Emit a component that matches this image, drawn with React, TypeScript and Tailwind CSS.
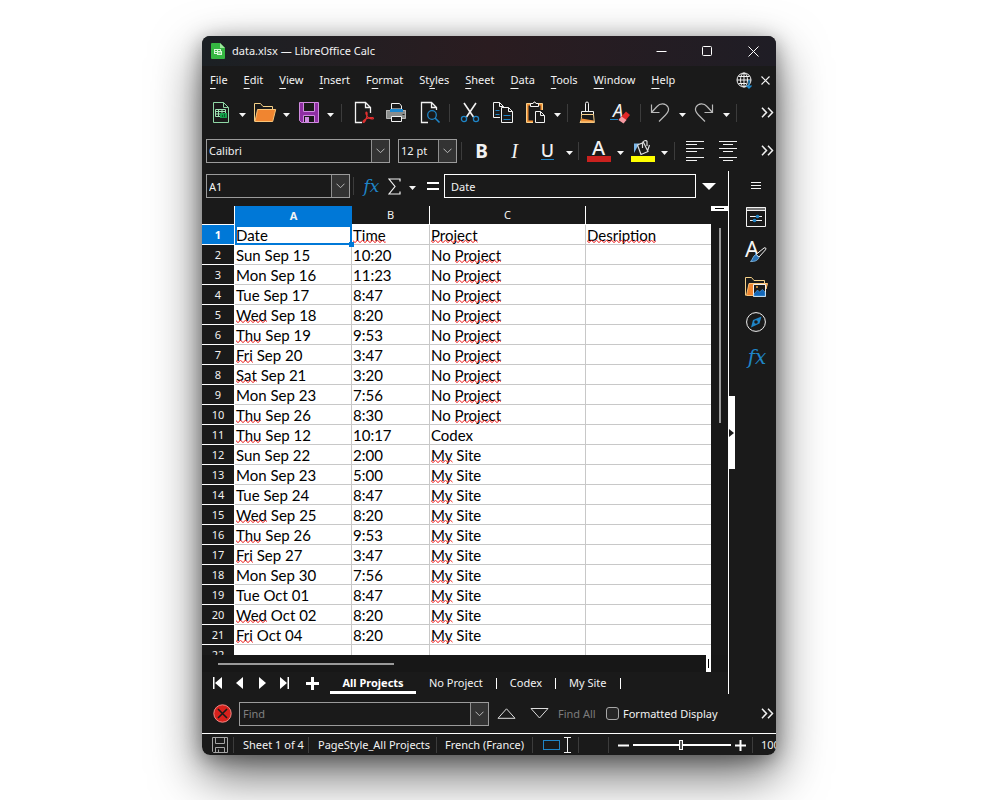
import type { ReactNode } from "react";

const rows: [string, string, string][] = [
  ["Date", "Time", "Project"],
  ["Sun Sep 15", "10:20", "No Project"],
  ["Mon Sep 16", "11:23", "No Project"],
  ["Tue Sep 17", "8:47", "No Project"],
  ["Wed Sep 18", "8:20", "No Project"],
  ["Thu Sep 19", "9:53", "No Project"],
  ["Fri Sep 20", "3:47", "No Project"],
  ["Sat Sep 21", "3:20", "No Project"],
  ["Mon Sep 23", "7:56", "No Project"],
  ["Thu Sep 26", "8:30", "No Project"],
  ["Thu Sep 12", "10:17", "Codex"],
  ["Sun Sep 22", "2:00", "My Site"],
  ["Mon Sep 23", "5:00", "My Site"],
  ["Tue Sep 24", "8:47", "My Site"],
  ["Wed Sep 25", "8:20", "My Site"],
  ["Thu Sep 26", "9:53", "My Site"],
  ["Fri Sep 27", "3:47", "My Site"],
  ["Mon Sep 30", "7:56", "My Site"],
  ["Tue Oct 01", "8:47", "My Site"],
  ["Wed Oct 02", "8:20", "My Site"],
  ["Fri Oct 04", "8:20", "My Site"],
  ["", "", ""],
];

const misspelt = new Set(["Time", "Project", "Desription", "Wed", "Thu", "Fri", "Sat", "My"]);

// Tile shared by every spelling mark.
function SquigglePattern() {
  return (
    <svg width="0" height="0" className="absolute" aria-hidden="true">
      <defs>
        <pattern id="squiggle" width="5" height="3" patternUnits="userSpaceOnUse">
          <path d="M-.5 .2L2 2.600 4.500.2 5.500 1.200" fill="none" stroke="#f01818" strokeWidth="1" />
        </pattern>
      </defs>
    </svg>
  );
}

function Misspelt({ word }: { word: string }) {
  return (
    <span className="relative inline-block">
      {word}
      <svg className="absolute bottom-px left-0 h-[3px] w-full" aria-hidden="true">
        <rect width="100%" height="3" fill="url(#squiggle)" />
      </svg>
    </span>
  );
}

function Spelled({ text }: { text: string }) {
  return (
    <>
      {text.split(" ").map((word, i) => (
        <span key={i}>
          {i > 0 && " "}
          {misspelt.has(word) ? <Misspelt word={word} /> : word}
        </span>
      ))}
    </>
  );
}

function Icon({ children, size = 23 }: { children: ReactNode; size?: number }) {
  return (
    <svg width={size} height={size} viewBox={`0 0 ${size} ${size}`} fill="none" aria-hidden="true" className="shrink-0 overflow-visible">
      {children}
    </svg>
  );
}

function Tool({ label, children }: { label: string; children: ReactNode }) {
  return (
    <button aria-label={label} className="flex h-7 w-[33px] shrink-0 items-center justify-center">
      {children}
    </button>
  );
}

function Arrow({ label, className = "w-[11px]" }: { label: string; className?: string }) {
  return (
    <button aria-label={label} className={`flex h-7 shrink-0 items-center justify-center pt-1 ${className}`}>
      <svg width="7" height="4" viewBox="0 0 7 4" aria-hidden="true">
        <path d="M0 0h7L3.5 4z" fill="#f5f5f5" />
      </svg>
    </button>
  );
}

function Sep({ className = "w-[7px]" }: { className?: string }) {
  return (
    <span className={`flex shrink-0 justify-center ${className}`}>
      <span className="h-[18px] w-px bg-[#3c3c3c]" />
    </span>
  );
}

function More({ label }: { label: string }) {
  return (
    <button aria-label={label} className="mr-[2px] ml-auto shrink-0">
      <svg width="13" height="11" viewBox="0 0 13 11" fill="none" stroke="#f0f0f0" strokeWidth="1.5" aria-hidden="true">
        <path d="M1 .8 5.500 5.500 1 10.200M7 .8l4.500 4.700L7 10.200" />
      </svg>
    </button>
  );
}

function DropButton() {
  return (
    <span className="pointer-events-none flex w-[18px] shrink-0 items-center justify-center border-l border-[#8f8f8f] bg-[#333]">
      <svg width="9" height="6" viewBox="0 0 9 6" fill="none" stroke="#b8b8b8" aria-hidden="true">
        <path d="M.5.7l4 4 4-4" />
      </svg>
    </span>
  );
}

function Combo({ label, value, className }: { label: string; value: string; className: string }) {
  return (
    <div className={`flex h-6 shrink-0 border border-[#9b9b9b] ${className}`}>
      <select aria-label={label} className="min-w-0 flex-1 appearance-none bg-transparent pt-px pl-[2px] outline-none">
        <option>{value}</option>
      </select>
      <DropButton />
    </div>
  );
}

const menus: [string, string, string][] = [
  ["", "F", "ile"],
  ["", "E", "dit"],
  ["", "V", "iew"],
  ["", "I", "nsert"],
  ["F", "o", "rmat"],
  ["St", "y", "les"],
  ["", "S", "heet"],
  ["", "D", "ata"],
  ["", "T", "ools"],
  ["", "W", "indow"],
  ["", "H", "elp"],
];

function TitleBar() {
  return (
    <header className="flex h-[30px] items-center bg-linear-to-r from-[#1b2024] via-[#2a1c20] to-[#1f1d25] pl-[9px]">
      <svg width="14" height="16" viewBox="0 0 14 16" aria-hidden="true">
        <path d="M1 0h8l5 5v10a1 1 0 0 1-1 1H1a1 1 0 0 1-1-1V1a1 1 0 0 1 1-1z" fill="#35b642" />
        <path d="M9 0l5 5H9z" fill="#9bea9b" />
        <path d="M3 6h7v2h1v4H6v-1H3z" fill="#d8f7d8" />
        <path d="M4 7.500h2M7 7.500h2M4 9.500h2M7 10h1M9 9v2" stroke="#35b642" />
      </svg>
      <h1 className="ml-[7px]">data.xlsx — LibreOffice Calc</h1>
      <div className="ml-auto flex">
        <button aria-label="Minimize" className="flex w-[46px] items-center justify-center">
          <Icon size={11}><path d="M.5 5.500h10" stroke="#fff" /></Icon>
        </button>
        <button aria-label="Maximize" className="flex w-[46px] items-center justify-center">
          <Icon size={11}><rect x=".5" y=".5" width="9" height="9" rx="1" stroke="#fff" /></Icon>
        </button>
        <button aria-label="Close" className="flex w-[46px] items-center justify-center">
          <Icon size={11}><path d="M.5.5l10 10M10.500.5l-10 10" stroke="#fff" /></Icon>
        </button>
      </div>
    </header>
  );
}

function MenuBar() {
  return (
    <nav className="flex h-[29px] items-center gap-4 pb-px pl-2">
      {menus.map(([a, key, b]) => (
        <button key={a + key + b} className="whitespace-nowrap">
          {a}
          <span className="underline underline-offset-4 [text-decoration-skip-ink:none]">{key}</span>
          {b}
        </button>
      ))}
      <span className="mr-[6px] ml-auto flex items-center gap-2">
        <button aria-label="Update available">
          <Icon size={17}>
            <g stroke="#f2f2f2">
              <circle cx="8" cy="8" r="7" />
              <ellipse cx="8" cy="8" rx="3.500" ry="7" />
              <path d="M8 1v14M1 8h14M2.500 4.500h11M2.500 11.500h8" />
            </g>
            <path d="M13 8v8M10.500 13.500l2.500 2.500 2.500-2.500" stroke="#1e8bd0" strokeWidth="1.400" />
          </Icon>
        </button>
        <button aria-label="Close document">
          <Icon size={9}><path d="M.5.5l8 8M8.500.5l-8 8" stroke="#f2f2f2" strokeWidth="1.200" /></Icon>
        </button>
      </span>
    </nav>
  );
}

function StandardBar() {
  return (
    <div role="toolbar" aria-label="Standard" className="flex h-[35px] items-center pl-[2px]">
      <Tool label="New">
        <Icon>
          <path d="M4.500 1.500h10l5 5v15h-15zM14.500 1.500v5h5" stroke="#8fd7a5" />
          <path d="M6.500 8.500h10v7h-10zM6.500 10.500h10M6.500 13h10M9.500 8.500v7M13 8.500v7" stroke="#9fe3b4" />
          <path d="M11 12h7v5h-7z" fill="#14a04a" />
          <path d="M13.500 14v2M15.500 13v3" stroke="#0b5c2b" />
        </Icon>
      </Tool>
      <Arrow label="New options" />
      <Tool label="Open">
        <Icon>
          <path d="M1.500 20.500v-18h6l2.500 3h9.500v4" stroke="#f4d088" />
          <path d="M4.500 8.500h18.200l-3 12H2z" fill="#f08530" stroke="#f9c377" />
        </Icon>
      </Tool>
      <Arrow label="Open options" />
      <Tool label="Save">
        <Icon>
          <path d="M2.500 1.500h19v20h-17l-2-2z" fill="#8f2fa3" stroke="#d08be0" />
          <path d="M6.500 1.500h11v9h-11z" fill="#1a1a1a" stroke="#d08be0" />
          <path d="M6.500 14.500h11v7h-11z" fill="#1a1a1a" stroke="#d08be0" />
          <path d="M8 16h4v5H8z" fill="#d08be0" />
        </Icon>
      </Tool>
      <Arrow label="Save options" />
      <Sep className="w-[11px]" />
      <Tool label="Export as PDF">
        <Icon>
          <path d="M10 21.500H3.500v-20h10l5 5V12M13.500 1.500v5h5" stroke="#f2f2f2" strokeWidth="1.300" />
          <path d="M14.500 11c-1.300 0-.4 3.600 1.800 5.600 1.800 1.500 5.200 1.900 5.200.7 0-1.400-5.600-.4-7.800.7-2.100 1-3.200 2.900-2.500 3.300 1 .6 2.600-2.200 3.400-5 .7-2.400.7-5.300-.1-5.300z" stroke="#e03030" strokeWidth="1.200" />
        </Icon>
      </Tool>
      <Tool label="Print">
        <Icon>
          <path d="M1 9h20v8.500H1z" fill="#8a8d8c" />
          <path d="M1.500 9.500h19v8h-19z" stroke="#b5b5b5" />
          <path d="M6.500 8V2.500h8l2 2.500v3z" fill="#1a1a1a" stroke="#f2f2f2" />
          <path d="M5 8h13v3H5z" fill="#1b87cf" />
          <path d="M6.500 15.500h10v5h-10z" fill="#1a1a1a" stroke="#f2f2f2" />
          <path d="M17.500 13.500h2" stroke="#222" />
        </Icon>
      </Tool>
      <Tool label="Print preview">
        <Icon>
          <path d="M10 21.500H3.500v-20h10l5 5V9M13.500 1.500v5h5" stroke="#f2f2f2" strokeWidth="1.300" />
          <circle cx="14" cy="14" r="4.300" stroke="#1f85c7" strokeWidth="1.300" />
          <path d="M17 17l4.500 4.500" stroke="#1f85c7" strokeWidth="1.600" />
        </Icon>
      </Tool>
      <Sep />
      <Tool label="Cut">
        <Icon>
          <path d="M6 2l9.500 14M18 2L8.500 16" stroke="#f2f2f2" strokeWidth="1.600" />
          <circle cx="6" cy="18" r="2.600" stroke="#1f85c7" strokeWidth="1.300" />
          <circle cx="18" cy="18" r="2.600" stroke="#1f85c7" strokeWidth="1.300" />
        </Icon>
      </Tool>
      <Tool label="Copy">
        <Icon>
          <path d="M9 16.500H2.500v-15h6l4 4V6M8.500 1.500v4h4" stroke="#f2f2f2" />
          <path d="M10.500 6.500h7l4 4v11h-11zM17.500 6.500v4h4" stroke="#f2f2f2" />
          <path d="M4.500 9.500h4M4.500 13.500h4M12.500 14.500h7M12.500 18.500h7" stroke="#1f85c7" />
        </Icon>
      </Tool>
      <Tool label="Paste">
        <Icon>
          <path d="M9 20.500H3.500v-17h14V9" stroke="#f09035" strokeWidth="2" />
          <path d="M9 21.500H2.500v-19h16V9" stroke="#f8d18c" />
          <path d="M6.500 5.500v-3h2.500l1-1.500h1l1 1.500h2.500v3z" fill="#1a1a1a" stroke="#f2f2f2" />
          <path d="M11.500 10.500h5l4 4v7h-9zM16.500 10.500v4h4" stroke="#f2f2f2" fill="#1a1a1a" />
        </Icon>
      </Tool>
      <Arrow label="Paste options" />
      <Sep className="w-[8px]" />
      <Tool label="Clone formatting">
        <Icon>
          <path d="M9.500 10V2.500q0-1.500 1.500-1.500t1.500 1.500V10" stroke="#f2f2f2" />
          <path d="M5.500 13.500v-3h12v3z" stroke="#f2f2f2" />
          <path d="M5.500 13.500h12l.8 8H4c1.500-2 1.500-5 1.500-8z" fill="#1a1a1a" stroke="#f8d18c" />
          <path d="M5.500 17.500l12.300 2v2H4.500z" fill="#f09035" />
          <path d="M4 21h14.500" stroke="#f8d18c" />
        </Icon>
      </Tool>
      <Tool label="Clear formatting">
        <Icon>
          <text x="4" y="16" fill="#f2f2f2" fontSize="18" fontStyle="italic" className="font-['Noto_Sans',sans-serif]">A</text>
          <path d="M1 18.500h8" stroke="#1f85c7" />
          <path d="M17 10.500l4 3.500-6.500 8-5-3.500z" fill="#e02828" />
          <path d="M12.500 15.500l5 3.500-3 3.500-5-3.500z" fill="#f59aa2" />
        </Icon>
      </Tool>
      <Sep />
      <Tool label="Undo">
        <Icon>
          <path d="M2.500 3.500v8h8M2.500 11.500L8 5.500C11 2 16.500 2 19 6c1.500 3 0 5.500-2.500 8L10 20.500" stroke="#b9b9b9" strokeWidth="1.200" />
        </Icon>
      </Tool>
      <Arrow label="Undo options" />
      <Tool label="Redo">
        <Icon>
          <path d="M19.500 3.500v8h-8M19.500 11.500L14 5.500C11 2 5.500 2 3 6c-1.500 3 0 5.500 2.500 8l6.500 6.500" stroke="#b9b9b9" strokeWidth="1.200" />
        </Icon>
      </Tool>
      <Arrow label="Redo options" />
      <Sep className="w-[8px]" />
      <More label="More standard tools" />
    </div>
  );
}

function FormattingBar() {
  return (
    <div role="toolbar" aria-label="Formatting" className="flex h-[41px] items-center pl-1">
      <Combo label="Font name" value="Calibri" className="w-[184px]" />
      <Combo label="Font size" value="12 pt" className="ml-2 w-[59px]" />
      <Sep className="w-[8px]" />
      <Tool label="Bold"><b className="text-[19px] leading-6 font-bold">B</b></Tool>
      <Tool label="Italic"><i className="font-['Liberation_Serif',serif] text-[20px] leading-6">I</i></Tool>
      <Tool label="Underline">
        <span className="border-b border-[#1f85c7] text-[18px] leading-[18px] font-medium">U</span>
      </Tool>
      <Arrow label="Underline options" />
      <Sep />
      <Tool label="Font color">
        <span className="flex w-6 flex-col items-center border-b-6 border-[#c9211e] text-[20px] leading-[17px] font-medium">A</span>
      </Tool>
      <Arrow label="Font color options" />
      <Tool label="Background color">
        <svg width="24" height="23" viewBox="0 0 24 23" fill="none" aria-hidden="true">
          <path d="M0 17h24v6H0z" fill="#ff0" />
          <path d="M3 14V4.500h5.500L6 8.500z" fill="#7db8ea" />
          <path d="M6.500 6l6-2.500 4.500 9-7 3zM16.500 12l2-6M11.500 9V4c0-2 4-3.500 4.500-1.500V7" stroke="#dcdcdc" strokeWidth="1.200" />
        </svg>
      </Tool>
      <Arrow label="Background color options" />
      <Sep className="w-[9px]" />
      <Tool label="Align left">
        <Icon><path d="M2 2.500h18M2 5.500h11M2 9.500h18M2 12.500h11M2 18.500h18M2 21.500h11" stroke="#f2f2f2" /></Icon>
      </Tool>
      <Tool label="Align center">
        <Icon><path d="M2 2.500h18M6 5.500h10M2 9.500h18M6 12.500h10M2 18.500h18M6 21.500h10" stroke="#f2f2f2" /></Icon>
      </Tool>
      <More label="More formatting tools" />
    </div>
  );
}

function FormulaBar() {
  return (
    <div className="flex h-[35px] items-center pb-[5px] pl-1">
      <div className="flex h-6 w-36 shrink-0 border border-[#9b9b9b]">
        <input aria-label="Name box" defaultValue="A1" className="w-0 min-w-0 flex-1 bg-transparent pt-px pl-[2px] outline-none" />
        <DropButton />
      </div>
      <Sep />
      <button aria-label="Function wizard" className="w-[27px] shrink-0 pl-[2px] font-['DejaVu_Serif','Liberation_Serif',serif] text-[17px] leading-6 text-[#1f85c7] italic">fx</button>
      <button aria-label="Select function" className="flex w-5 shrink-0 justify-center">
        <svg width="13" height="17" viewBox="0 0 13 17" fill="none" stroke="#f2f2f2" strokeWidth="1.200" aria-hidden="true">
          <path d="M12 3.500V1H1l6 7.500L1 16h11v-2.500" />
        </svg>
      </button>
      <Arrow label="Function options" className="w-[17px]" />
      <button aria-label="Formula" className="flex w-[23px] shrink-0 flex-col items-center gap-[4px]">
        <span className="h-[2px] w-3 bg-white" />
        <span className="h-[2px] w-3 bg-white" />
      </button>
      <input aria-label="Formula input" defaultValue="Date" className="h-6 w-0 min-w-0 flex-1 border border-white bg-transparent pt-px pl-[6px] outline-none" />
      <button aria-label="Expand formula bar" className="mr-[6px] flex w-[26px] shrink-0 justify-center">
        <svg width="14" height="7" viewBox="0 0 14 7" aria-hidden="true"><path d="M0 0h14L7 7z" fill="#fff" /></svg>
      </button>
    </div>
  );
}

function Sheet() {
  const cell = "h-5 overflow-hidden border-r border-b border-[#c8c8c8] p-0 pt-px pl-px whitespace-nowrap";
  const head = "h-[19px] border-b border-white p-0 text-center font-normal";
  return (
    <div className="flex h-[449px]">
      <div className="min-w-0 flex-1 overflow-hidden bg-white">
        <table className="w-full table-fixed border-separate border-spacing-0 font-[Lato,sans-serif] text-[15px] leading-[18px] text-black">
          <colgroup>
            <col className="w-[33px]" />
            <col className="w-[117px]" />
            <col className="w-[78px]" />
            <col className="w-[156px]" />
            <col />
          </colgroup>
          <thead className="bg-[#1a1a1a] font-['Noto_Sans',sans-serif] text-[11px] leading-[18px] text-[#f2f2f2]">
            <tr>
              <th aria-label="Select all" className={`${head} border-r`} />
              <th className="h-[19px] bg-[#0078d7] p-0 text-center font-bold">A</th>
              <th className={`${head} border-r`}>B</th>
              <th className={`${head} border-r`}>C</th>
              <th aria-label="D" className={head} />
            </tr>
          </thead>
          <tbody>
            {rows.map(([date, time, project], i) => (
              <tr key={i}>
                <th
                  className={
                    i === 0
                      ? "h-5 border-r border-b border-white bg-[#0078d7] p-0 text-center font-['Noto_Sans',sans-serif] text-[11px] leading-[19px] font-bold text-white"
                      : "h-5 border-r border-b border-white bg-[#1a1a1a] p-0 text-center font-['Noto_Sans',sans-serif] text-[11px] leading-[19px] font-normal text-[#f2f2f2]"
                  }
                >
                  {i + 1}
                </th>
                {i === 0 ? (
                  <td className="relative h-5 border-r border-b border-[#0078d7] p-0 pt-px pl-px outline-2 -outline-offset-2 outline-[#0078d7]">
                    {date}
                    <span className="absolute -right-[3px] -bottom-[3px] size-[5px] bg-[#0078d7]" />
                  </td>
                ) : (
                  <td className={cell}><Spelled text={date} /></td>
                )}
                <td className={cell}><Spelled text={time} /></td>
                <td className={cell}><Spelled text={project} /></td>
                <td className={`${cell} border-r-0`}>{i === 0 && <Spelled text="Desription" />}</td>
              </tr>
            ))}
          </tbody>
        </table>
      </div>
      <div className="flex w-[17px] flex-col items-center bg-[#181818]">
        <div className="flex h-[5px] w-full items-center justify-center bg-white">
          <span className="h-px w-[9px] bg-black" />
        </div>
        <span className="mt-[17px] h-[195px] w-[2px] bg-[#9a9a9a]" />
      </div>
    </div>
  );
}

function SheetTabs() {
  const nav: [string, string][] = [
    ["First sheet", "M1 0h1.500v12H1zM10 0v12L3 6z"],
    ["Previous sheet", "M9 0v12L2 6z"],
    ["Next sheet", "M3 0v12l7-6z"],
    ["Last sheet", "M2 0v12l7-6zM9.500 0H11v12H9.500z"],
  ];
  return (
    <div className="flex h-[22px] items-center pl-[5px]">
      {nav.map(([label, d]) => (
        <button key={label} aria-label={label} className="flex w-[22px] shrink-0 justify-center">
          <svg width="12" height="12" viewBox="0 0 12 12" fill="#fff" aria-hidden="true"><path d={d} /></svg>
        </button>
      ))}
      <button aria-label="Add sheet" className="flex w-[35px] shrink-0 justify-center">
        <Icon size={13}><path d="M6.500 0v13M0 6.500h13" stroke="#fff" strokeWidth="3" /></Icon>
      </button>
      <button className="h-[22px] w-[86px] shrink-0 border-b-3 border-white pt-[2px] font-bold whitespace-nowrap text-white">All Projects</button>
      {["No Project", "Codex", "My Site"].map((name) => (
        <span key={name} className="flex shrink-0 items-center">
          <button className="px-[13px] whitespace-nowrap">{name}</button>
          <span className="h-[11px] w-px bg-white" />
        </span>
      ))}
    </div>
  );
}

function Sidebar() {
  const slot = "flex h-[35px] w-10 items-center justify-center";
  return (
    <aside className="flex w-12 shrink-0 justify-between border-l border-white">
      <button aria-label="Hide sidebar" className="flex h-[73px] w-[6px] items-center self-center bg-white">
        <svg width="5" height="8" viewBox="0 0 5 8" aria-hidden="true"><path d="M0 0v8l5-4z" fill="#1a1a1a" /></svg>
      </button>
      <div className="flex flex-col">
        <button aria-label="Sidebar settings" className="flex h-7 w-10 items-center justify-center">
          <svg width="10" height="7" viewBox="0 0 10 7" stroke="#f2f2f2" aria-hidden="true"><path d="M0 .5h10M0 3.500h10M0 6.500h10" /></svg>
        </button>
        <button aria-label="Properties" className={slot}>
          <svg width="20" height="20" viewBox="0 0 20 20" fill="none" aria-hidden="true">
            <path d="M0 0h20v3H0z" fill="#777" />
            <path d="M.5.5h19v19H.5zM0 3.500h20M4 9.500h12M4 13.500h12" stroke="#f2f2f2" />
            <circle cx="11.500" cy="9.500" r="1.800" fill="#1f85c7" />
            <circle cx="8.500" cy="13.500" r="1.800" fill="#1f85c7" />
          </svg>
        </button>
        <button aria-label="Styles" className={slot}>
          <svg width="22" height="22" viewBox="0 0 22 22" fill="none" aria-hidden="true" className="overflow-visible">
            <text x="0" y="16" fill="#f5f5f5" fontSize="22" className="font-['Noto_Sans',sans-serif]">A</text>
            <path d="M11 13.500l8-6.500c1.500-1 2.500.5 1.500 1.800L14 16z" fill="#1a1a1a" stroke="#f2f2f2" />
            <path d="M11 13.500l3 3c-1.500 3.500-4.500 4-8.500 4 2-1.500 2.500-6 5.500-7z" fill="#2a72b5" stroke="#8cc4ee" strokeWidth=".8" />
          </svg>
        </button>
        <button aria-label="Gallery" className={slot}>
          <svg width="23" height="20" viewBox="0 0 23 20" fill="none" aria-hidden="true">
            <path d="M.5 18.500V.5h6l2.500 3h10.500v3" stroke="#f4d088" />
            <path d="M4 6.500h18.500L21 12v-3H9v9.500H1.500z" fill="#f08530" stroke="#f9c377" />
            <path d="M8.500 7.500h12v12h-12z" fill="#1a1a1a" stroke="#f2f2f2" />
            <path d="M9 17l3.500-4 2 2 3-2.500 2.500 2.500v4H9z" fill="#1467b8" stroke="#59a7e6" strokeWidth=".6" />
            <circle cx="12" cy="10" r="1" fill="#f0a040" />
          </svg>
        </button>
        <button aria-label="Navigator" className={slot}>
          <svg width="20" height="20" viewBox="0 0 20 20" fill="none" aria-hidden="true">
            <circle cx="10" cy="10" r="9.400" stroke="#f2f2f2" />
            <path fillRule="evenodd" d="M15.500 4.500l-2 7-8.500 4 2-7.500zM10 8.200a1.800 1.800 0 1 0 0 3.600 1.800 1.800 0 0 0 0-3.600z" fill="#1f85c7" />
          </svg>
        </button>
        <button aria-label="Functions" className={`${slot} pl-[2px] font-['DejaVu_Serif','Liberation_Serif',serif] text-[20px] leading-6 text-[#1f85c7] italic`}>fx</button>
      </div>
    </aside>
  );
}

function FindBar() {
  return (
    <div className="flex h-[39px] items-center pl-[11px]">
      <button aria-label="Close find bar" className="shrink-0">
        <svg width="19" height="19" viewBox="0 0 19 19" fill="none" aria-hidden="true">
          <circle cx="9.500" cy="9.500" r="8.700" fill="#d8211c" stroke="#f08a86" />
          <path d="M5 5l9 9M14 5l-9 9" stroke="#1a1a1a" strokeWidth="1.600" />
        </svg>
      </button>
      <div className="ml-[7px] flex h-6 w-[250px] shrink-0 border border-[#9b9b9b]">
        <input aria-label="Find" placeholder="Find" className="w-0 min-w-0 flex-1 bg-transparent pt-px pl-[3px] outline-none placeholder:text-[#808080]" />
        <DropButton />
      </div>
      <button aria-label="Find previous" className="ml-2 flex shrink-0">
        <svg width="19" height="11" viewBox="0 0 19 11" fill="none" stroke="#dcdcdc" aria-hidden="true"><path d="M1 10.300L9.500.8l8.500 9.500z" /></svg>
      </button>
      <button aria-label="Find next" className="ml-[14px] flex shrink-0">
        <svg width="19" height="11" viewBox="0 0 19 11" fill="none" stroke="#dcdcdc" aria-hidden="true"><path d="M1 .5L9.500 10 18 .5z" /></svg>
      </button>
      <button className="ml-[9px] w-[48px] shrink-0 text-left whitespace-nowrap text-[#7c7c7c]">Find All</button>
      <label className="flex items-center gap-1 whitespace-nowrap">
        <input type="checkbox" className="size-[13px] appearance-none rounded-[3px] border border-[#a8a8a8] bg-[#262626]" />
        Formatted Display
      </label>
      <More label="More find tools" />
    </div>
  );
}

function StatusBar() {
  const part = "flex h-4 shrink-0 items-center border-r border-[#3c3c3c] whitespace-nowrap";
  return (
    <footer className="flex h-[22px] items-center overflow-hidden border-t border-white pt-px">
      <span className={`${part} w-8 pl-[10px]`}>
        <svg width="16" height="16" viewBox="0 0 16 16" fill="none" stroke="#a5a5a5" aria-label="Document saved">
          <path d="M.5.5h15v15h-14l-1-1zM3.500.5v6h9v-6M3.500 15.500v-5h9v5M6.500 15.500v-3" />
        </svg>
      </span>
      <span className={`${part} w-[75px] pl-[9px]`}>Sheet 1 of 4</span>
      <span className={`${part} w-32 pl-[9px]`}>PageStyle_All Projects</span>
      <span className={`${part} w-24 pl-2`}>French (France)</span>
      <span className={`${part} w-[46px] gap-1 pl-[10px]`}>
        <span className="h-[10px] w-[17px] border border-[#1f85c7]" />
        <svg width="7" height="16" viewBox="0 0 7 16" fill="none" stroke="#f2f2f2" aria-hidden="true"><path d="M0 .5h7M0 15.500h7M3.500.5v15" /></svg>
      </span>
      <span className={`${part} w-[30px]`} />
      <span className={`${part} w-36 pl-[9px]`}>
        <button aria-label="Zoom out"><Icon size={11}><path d="M0 5.500h11" stroke="#fff" strokeWidth="2" /></Icon></button>
        <input
          type="range"
          aria-label="Zoom"
          min="0"
          max="100"
          defaultValue="49"
          className="mx-1 h-3 w-[98px] appearance-none bg-[linear-gradient(#fff,#fff)] bg-[length:100%_2px] bg-center bg-no-repeat [&::-webkit-slider-thumb]:h-[10px] [&::-webkit-slider-thumb]:w-1 [&::-webkit-slider-thumb]:appearance-none [&::-webkit-slider-thumb]:border [&::-webkit-slider-thumb]:border-white [&::-webkit-slider-thumb]:bg-[#555]"
        />
        <button aria-label="Zoom in"><Icon size={11}><path d="M0 5.500h11M5.500 0v11" stroke="#fff" strokeWidth="2" /></Icon></button>
      </span>
      <span className="pl-2 whitespace-nowrap">100%</span>
    </footer>
  );
}

export default function App() {
  return (
    <main className="min-h-screen overflow-hidden bg-white pt-9 pr-56 pb-[45px] pl-[202px] font-['Noto_Sans',sans-serif] text-[11px] leading-4 text-[#f2f2f2]">
      <SquigglePattern />
      <div className="rounded-lg shadow-[0_20px_50px_rgba(0,0,0,0.6),0_4px_20px_rgba(0,0,0,0.35)]">
        <div className="overflow-hidden rounded-lg bg-[#1a1a1a]">
          <TitleBar />
          <MenuBar />
          <StandardBar />
          <FormattingBar />
          <div className="flex">
            <div className="min-w-0 flex-1">
              <FormulaBar />
              <Sheet />
              <div className="flex h-[17px] justify-between bg-[#171717] pr-[17px] pl-4">
                <span className="mt-2 h-[2px] w-44 bg-[#9a9a9a]" />
                <span className="flex w-[5px] items-center justify-center bg-white">
                  <span className="h-[9px] w-px bg-black" />
                </span>
              </div>
              <SheetTabs />
            </div>
            <Sidebar />
          </div>
          <FindBar />
          <StatusBar />
        </div>
      </div>
    </main>
  );
}
